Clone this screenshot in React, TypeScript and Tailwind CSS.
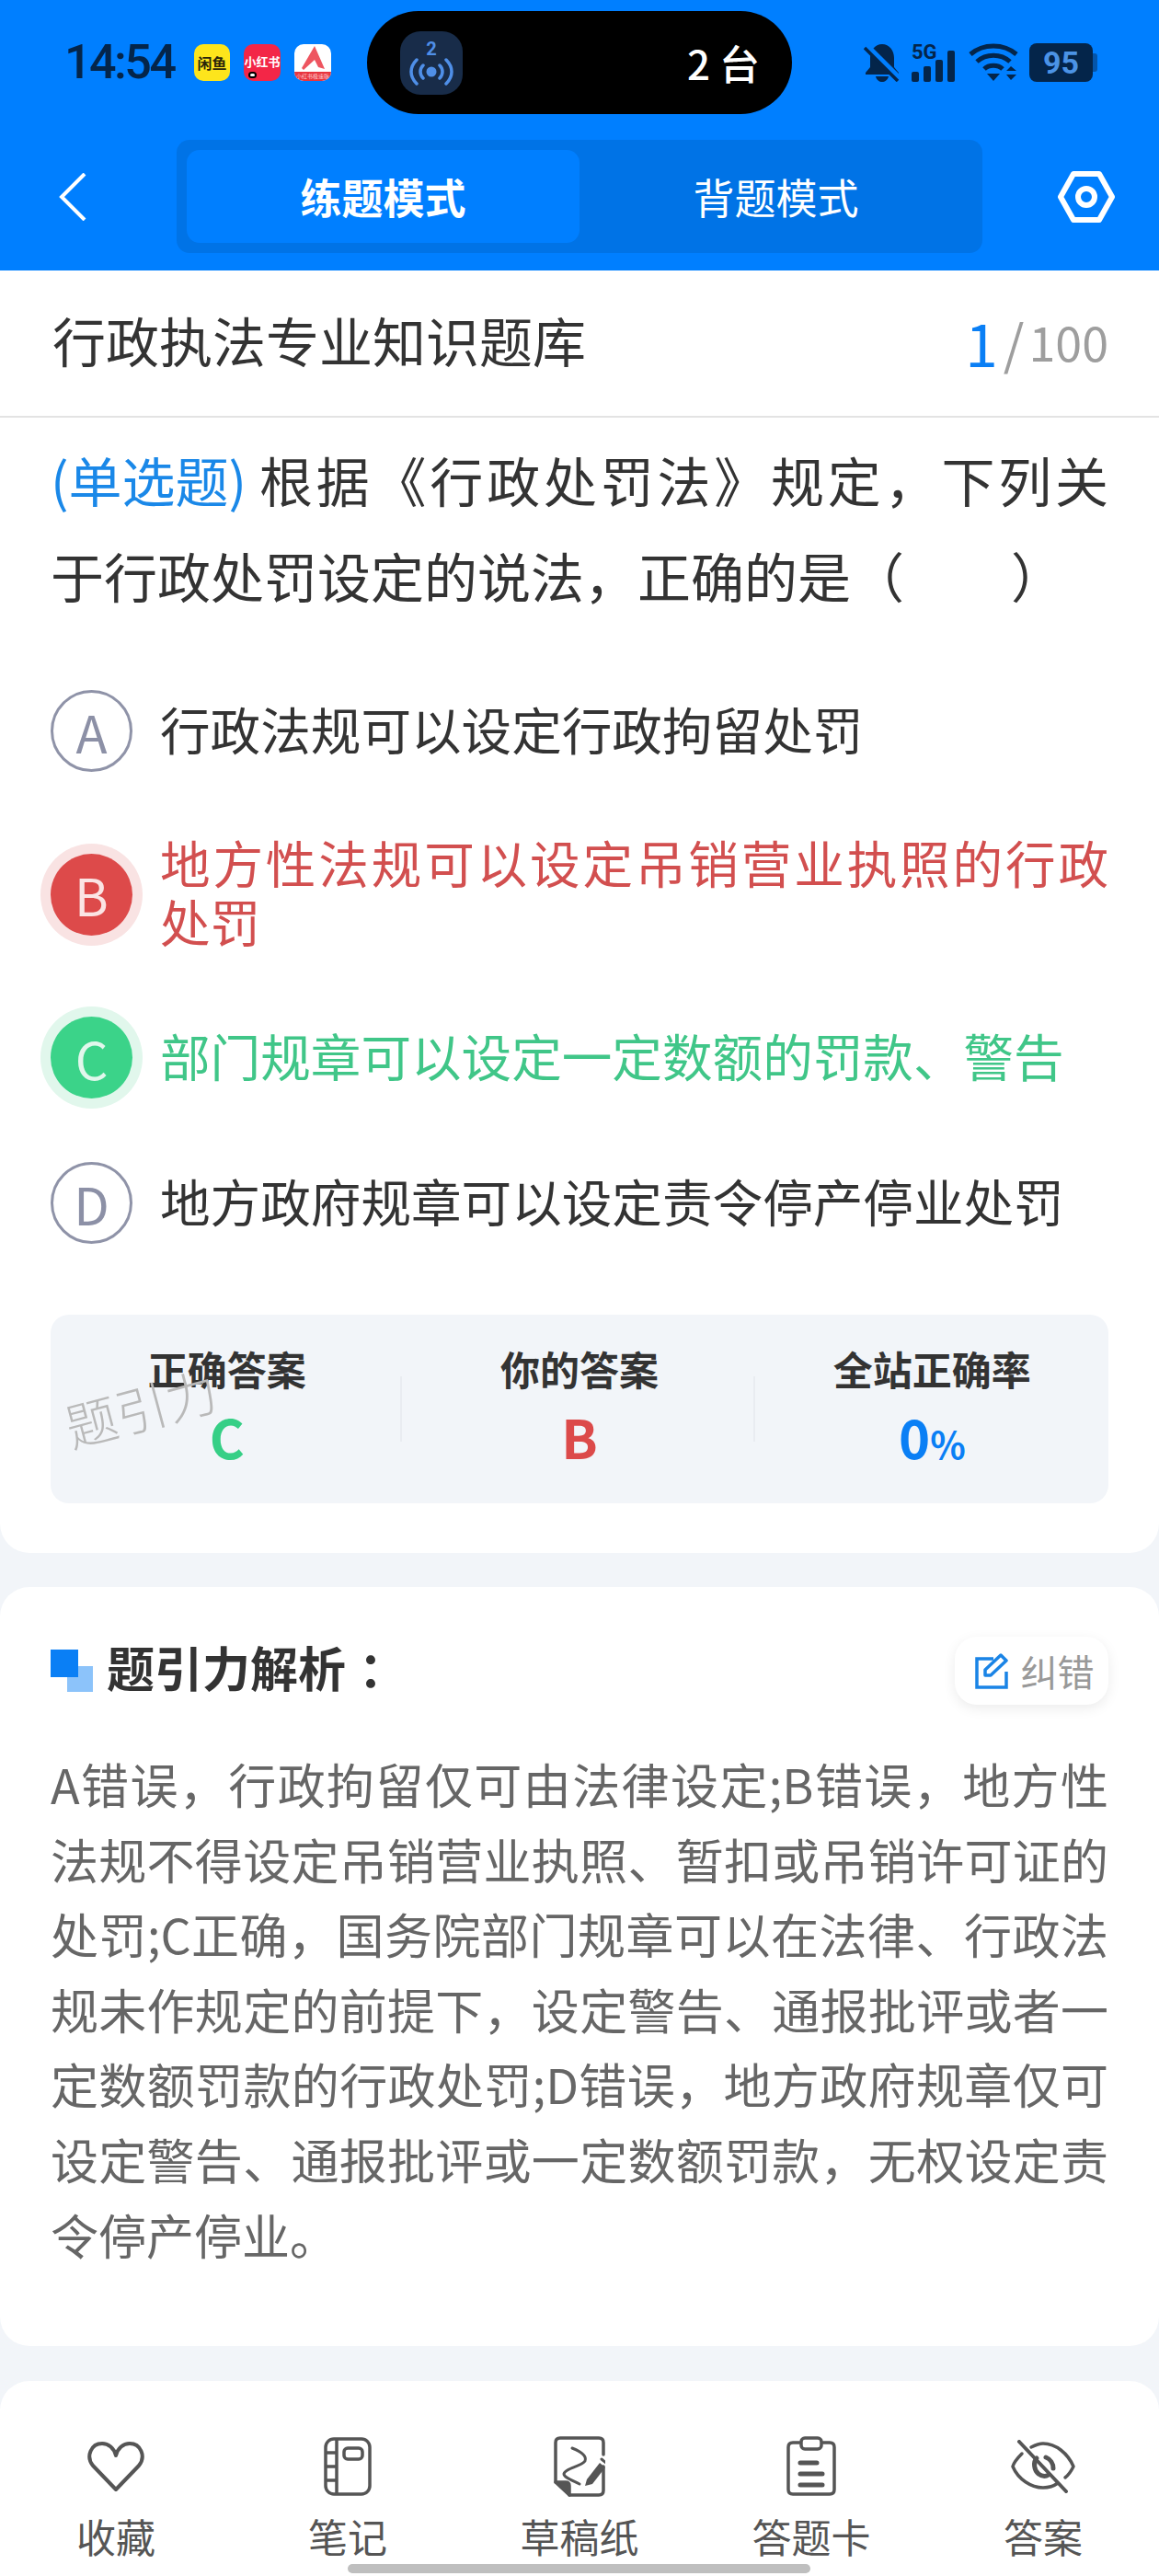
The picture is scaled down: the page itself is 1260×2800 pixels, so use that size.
const STATUS_DARK = "#04254a";

const TOOLBAR = [
  { label: "收藏", icon: <HeartIcon /> },
  { label: "笔记", icon: <NotebookIcon /> },
  { label: "草稿纸", icon: <DraftIcon /> },
  { label: "答题卡", icon: <ClipboardIcon /> },
  { label: "答案", icon: <EyeOffIcon /> },
];

const STATS = [
  { label: "正确答案", value: "C", cls: "text-[#36cf86]" },
  { label: "你的答案", value: "B", cls: "text-[#dc4a4a]" },
  { label: "全站正确率", value: "0", cls: "text-[#0a7ff5]", suffix: "%" },
];

function HeartIcon() {
  return (
    <svg width="64" height="56" viewBox="0 0 64 56" fill="none" stroke="#555" strokeWidth="4" strokeLinejoin="round">
      <path d="M32 53 L7 27 C-1 17 5 3 17 3 C24 3 30 8 32 16 C34 8 40 3 47 3 C59 3 65 17 57 27 Z" />
    </svg>
  );
}

function NotebookIcon() {
  return (
    <svg width="52" height="64" viewBox="0 0 52 64" fill="none" stroke="#555" strokeWidth="3.5" strokeLinejoin="round">
      <rect x="2" y="2" width="48" height="60" rx="9" />
      <path d="M14 2 V62 M2 17 H14 M2 32 H14 M2 47 H14" />
      <rect x="22" y="12" width="20" height="12" rx="4" />
    </svg>
  );
}

function DraftIcon() {
  return (
    <svg width="56" height="66" viewBox="0 0 56 66" fill="none" stroke="#555" strokeWidth="3.5" strokeLinejoin="round" strokeLinecap="round">
      <path d="M2 50 V7 Q2 2 7 2 H49 Q54 2 54 7 V20 M54 33 V59 Q54 64 49 64 H17" />
      <path d="M2 50 L17 64 V54 Q17 50 13 50 Z" fill="#555" />
      <path d="M20 13 C30 17 36 22 34 27 C30 33 12 35 11 41 C11 45 20 48 28 52" strokeWidth="3" />
      <path d="M36 47 L50 29 L56 34 L42 52 L34 54 Z" fill="#555" stroke="none" />
      <path d="M52 25 L58 30" stroke="#555" strokeWidth="3" />
    </svg>
  );
}

function ClipboardIcon() {
  return (
    <svg width="56" height="66" viewBox="0 0 56 66" fill="none" stroke="#555" strokeWidth="3.5" strokeLinecap="round" strokeLinejoin="round">
      <path d="M15 7 H8 Q3 7 3 12 V58 Q3 63 8 63 H48 Q53 63 53 58 V12 Q53 7 48 7 H41" />
      <rect x="17" y="2" width="22" height="12" rx="4" />
      <path d="M16 29 H34 M16 41 H40 M16 53 H40" strokeWidth="5" />
    </svg>
  );
}

function EyeOffIcon() {
  return (
    <svg width="70" height="58" viewBox="0 0 70 58" fill="none" stroke="#555" strokeWidth="3.5" strokeLinecap="round" strokeLinejoin="round">
      <path d="M12 15 C6 21 3 25 2 29 C8 43 22 52 35 52 C41 52 47 50 51 47 M22 8 C26 6 31 4 35 4 C49 4 62 15 68 29 C66 33 63 38 59 41" />
      <path d="M28 20 C24 24 25 33 30 37 C34 40 38 40 41 38 M38 19 C43 21 46 26 46 31" strokeWidth="5" />
      <path d="M9 2 L60 56" strokeWidth="4" />
    </svg>
  );
}

function BellOffIcon() {
  return (
    <svg width="40" height="42" viewBox="0 0 40 42">
      <path d="M20 1 C12 1 7 8 7 16 V26 L2 32 V34 H38 V32 L33 26 V16 C33 8 28 1 20 1 Z M13 36 C14 40 17 42 20 42 C23 42 26 40 27 36 Z" fill={STATUS_DARK} />
      <path d="M2 2 L38 38" stroke="#007fff" strokeWidth="7" />
      <path d="M1 5 L37 41" stroke={STATUS_DARK} strokeWidth="3.5" />
    </svg>
  );
}

function WifiIcon() {
  return (
    <svg width="54" height="42" viewBox="0 0 54 42" fill="none" stroke={STATUS_DARK} strokeWidth="5">
      <path d="M2 12 C16 0 38 0 52 12" />
      <path d="M9 20 C19 11 35 11 45 20" />
      <path d="M17 28 C22 23 32 23 37 28" />
      <path d="M20 33 H34 L27 41 Z" fill={STATUS_DARK} stroke="none" />
      <path d="M41 30 L46 25 L52 30 Z M41 34 H52 L46 40 Z" fill={STATUS_DARK} stroke="none" />
    </svg>
  );
}

function SignalIcon() {
  return (
    <div className="relative h-[42px] w-[50px]">
      <span className="absolute left-0 top-[-3px] text-[22px] leading-[26px] font-bold text-[#04254a] [font-family:'Roboto',sans-serif]">5G</span>
      <div className="absolute bottom-0 left-0 flex items-end gap-[5px]">
        <span className="h-[11px] w-[8px] rounded-[2px] bg-[#04254a]" />
        <span className="h-[17px] w-[8px] rounded-[2px] bg-[#04254a]" />
        <span className="h-[24px] w-[8px] rounded-[2px] bg-[#04254a]" />
        <span className="h-[34px] w-[8px] rounded-[2px] bg-[#04254a]" />
      </div>
    </div>
  );
}

function BroadcastTile() {
  return (
    <div className="flex h-[69px] w-[68px] flex-col items-center justify-center rounded-[22px] bg-[#182c49]">
      <span className="text-[20px] leading-[20px] font-bold text-[#4f8fe8] [font-family:'Roboto',sans-serif]">2</span>
      <svg width="50" height="30" viewBox="0 0 50 30" fill="none" stroke="#4f8fe8" strokeWidth="3.5" strokeLinecap="round">
        <path d="M9 2 C1 10 1 20 9 28 M41 2 C49 10 49 20 41 28 M16 8 C12 12 12 18 16 22 M34 8 C38 12 38 18 34 22" />
        <circle cx="25" cy="15" r="5.5" fill="#4f8fe8" stroke="none" />
      </svg>
    </div>
  );
}

function AppIcons() {
  return (
    <div className="ml-[22px] flex gap-[15px]">
      <div className="flex h-[40px] w-[39px] items-center justify-center rounded-[10px] bg-[#fde51c] text-[16px] leading-none font-bold whitespace-nowrap text-[#29240a]">闲鱼</div>
      <div className="relative flex h-[40px] w-[40px] items-center justify-center rounded-[10px] bg-[#f32647] pb-[4px] text-[13px] leading-none font-bold whitespace-nowrap text-white">
        小红书
        <span className="absolute bottom-[3px] left-[5px] h-[7px] w-[9px] rounded-full border-[2px] border-black bg-white" />
      </div>
      <div className="relative h-[40px] w-[40px] overflow-hidden rounded-[10px] bg-white">
        <svg width="40" height="32" viewBox="0 0 40 32" className="absolute left-0 top-0">
          <path d="M22 2 L33 27 L26 25 L22 17 L10 28 L8 26 Z" fill="#ee5560" />
        </svg>
        <div className="absolute bottom-0 left-0 flex h-[10px] w-full items-center justify-center bg-[#e8353f] text-[6px] leading-none whitespace-nowrap text-[#ffd0d0]">小红书极速版</div>
      </div>
    </div>
  );
}

function StatusBar() {
  return (
    <div className="flex h-[124px] items-start pl-[70px] pt-[12px]">
      <div className="mt-[36px] flex h-[40px] items-center">
        <span className="w-[119px] text-[52px] leading-[40px] font-medium tracking-[-2.5px] text-[#04254a] [font-family:'Roboto',sans-serif]">14:54</span>
        <AppIcons />
      </div>
      <div className="ml-[39px] flex h-[112px] w-[462px] items-center justify-between rounded-full bg-black pl-[36px] pr-[35px]">
        <BroadcastTile />
        <span className="text-[44px] leading-none font-medium text-white">2 台</span>
      </div>
      <div className="ml-[78px] mt-[35px] flex items-center gap-[12px]">
        <BellOffIcon />
        <SignalIcon />
        <WifiIcon />
        <div className="flex items-center">
          <div className="flex h-[42px] w-[69px] items-center justify-center rounded-[8px] bg-[#04254a] text-[34px] leading-none font-bold text-[#4b93e6] [font-family:'Roboto',sans-serif]">95</div>
          <span className="h-[20px] w-[5px] rounded-r-[3px] bg-[#0455aa]" />
        </div>
      </div>
    </div>
  );
}

function NavBar() {
  return (
    <div className="mt-[28px] flex h-[123px] items-center pl-[64px]">
      <svg width="30" height="52" viewBox="0 0 30 52" fill="none" stroke="white" strokeWidth="4">
        <path d="M28 1 L3 26 L28 51" />
      </svg>
      <div className="ml-[98px] flex h-[123px] w-[876px] rounded-[14px] bg-[#0073e6] p-[11px] text-[45px] text-white">
        <div className="flex w-[427px] items-center justify-center rounded-[14px] bg-[#007fff] font-bold">练题模式</div>
        <div className="flex flex-1 items-center justify-center">背题模式</div>
      </div>
      <svg className="ml-[82px]" width="62" height="56" viewBox="0 0 62 56" fill="none" stroke="white" strokeWidth="6" strokeLinejoin="round">
        <path d="M17 3 H45 L59 28 L45 53 H17 L3 28 Z" />
        <circle cx="31" cy="28" r="9" />
      </svg>
    </div>
  );
}

function Option({ letter, text, state }: { letter: string; text: string; state?: "wrong" | "right" }) {
  const badge =
    state === "wrong"
      ? "bg-[#dd4a4a] text-[#fbe4e4] shadow-[0_0_0_11px_#f9e3e3]"
      : state === "right"
        ? "bg-[#3bd389] text-[#e1f7ec] shadow-[0_0_0_11px_#e1f7ec]"
        : "border-[3px] border-[#8f93a8] text-[#8c90a6]";
  const color = state === "wrong" ? "text-[#d24f4f]" : state === "right" ? "text-[#40c688]" : "text-[#333]";
  return (
    <div className="flex items-center">
      <div className={`flex h-[89px] w-[89px] shrink-0 items-center justify-center rounded-full text-[56px] leading-none ${badge}`}>
        {letter}
      </div>
      <p className={`-mt-[3px] mb-[3px] ml-[30px] flex-1 text-justify text-[54.6px] leading-[64px] ${color}`}>{text}</p>
    </div>
  );
}

function QuestionCard() {
  return (
    <section className="rounded-b-[32px] bg-white">
      <div className="flex h-[160px] items-center justify-between border-b-2 border-[#e3e3e3] pl-[57px] pr-[55px]">
        <h1 className="-mt-[4px] mb-[4px] text-[58px] text-[#333]">行政执法专业知识题库</h1>
        <div className="-mt-[2px] mb-[2px] flex items-center text-[#9e9e9e]">
          <span className="text-[64px] leading-[70px] text-[#0a7ff5]">1</span>
          <span className="ml-[6px] mr-[5px] text-[58px] leading-[70px]">/</span>
          <span className="text-[52px] leading-[70px]">100</span>
        </div>
      </div>
      <div className="px-[55px] pb-[54px] pt-[15px]">
        <p className="text-justify text-[58px] leading-[104px] text-[#333]">
          <span className="mr-[10px] inline-block text-[#1a88e8]">(单选题)</span>
          根据《行政处罚法》规定，下列关于行政处罚设定的说法，正确的是（　　）
        </p>
        <div className="mt-[73px] flex flex-col gap-[69px]">
          <Option letter="A" text="行政法规可以设定行政拘留处罚" />
          <Option letter="B" text="地方性法规可以设定吊销营业执照的行政处罚" state="wrong" />
          <Option letter="C" text="部门规章可以设定一定数额的罚款、警告" state="right" />
          <Option letter="D" text="地方政府规章可以设定责令停产停业处罚" />
        </div>
        <div className="relative mt-[77px] grid h-[205px] grid-cols-3 rounded-[20px] bg-[#f2f5f9] pt-[31px]">
          {STATS.map((stat, i) => (
            <div key={stat.label} className="relative flex flex-col items-center">
              <span className="text-[43px] leading-[54px] font-bold text-[#333]">{stat.label}</span>
              <span className={`mt-[11px] text-[58px] leading-[72px] font-bold ${stat.cls}`}>
                {stat.value}
                {stat.suffix && <span className="text-[40px]">{stat.suffix}</span>}
              </span>
              {i > 0 && <span className="absolute left-[-3px] top-[36px] h-[71px] w-[2px] bg-[#e9ecf1]" />}
            </div>
          ))}
          <span className="absolute left-[14px] top-[72px] -rotate-[15deg] text-[56px] leading-none font-light text-[#b9b9b9]">
            题引力
          </span>
        </div>
      </div>
    </section>
  );
}

function AnalysisCard() {
  return (
    <section className="mt-[37px] rounded-[32px] bg-white px-[55px] pb-[81px] pt-[54px]">
      <div className="flex h-[74px] items-center justify-between">
        <div className="flex items-center">
          <div className="relative h-[46px] w-[46px]">
            <span className="absolute bottom-0 right-0 h-[28px] w-[28px] bg-[#8cc3fa]" />
            <span className="absolute left-0 top-0 h-[30px] w-[30px] bg-[#0a7ff5]" />
          </div>
          <h2 className="-mt-[4px] mb-[4px] ml-[15px] text-[52px] font-bold text-[#333]">
            题引力解析<span className="ml-[14px]">：</span>
          </h2>
        </div>
        <button className="flex h-[74px] w-[167px] items-center justify-center gap-[14px] rounded-[24px] bg-white pl-[6px] text-[40px] text-[#999] shadow-[0_4px_14px_rgba(0,0,0,0.08)]">
          <svg width="36" height="40" viewBox="0 0 36 40" fill="none" stroke="#1a84e6" strokeWidth="3.5">
            <path d="M20 7 H2 V38 H34 V21" />
            <path d="M11 25 L11 19 L28 3 L34 9 L17 25 Z" strokeLinejoin="round" />
          </svg>
          <span className="whitespace-nowrap">纠错</span>
        </button>
      </div>
      <p className="mt-[45px] text-justify text-[52px] leading-[81.6px] text-[#666]">
        A错误，行政拘留仅可由法律设定;B错误，地方性法规不得设定吊销营业执照、暂扣或吊销许可证的处罚;C正确，国务院部门规章可以在法律、行政法规未作规定的前提下，设定警告、通报批评或者一定数额罚款的行政处罚;D错误，地方政府规章仅可设定警告、通报批评或一定数额罚款，无权设定责令停产停业。
      </p>
    </section>
  );
}

export default function App() {
  return (
    <div className="relative flex h-[2800px] w-[1260px] flex-col overflow-hidden bg-[#f2f5f9] [font-family:'Noto_Sans_CJK_SC','Noto_Sans',sans-serif] [text-spacing-trim:space-all]">
      <header className="h-[294px] bg-[#007fff]">
        <StatusBar />
        <NavBar />
      </header>
      <QuestionCard />
      <AnalysisCard />
      <nav className="mt-auto grid h-[212px] grid-cols-5 rounded-t-[32px] bg-white">
        {TOOLBAR.map((item) => (
          <div key={item.label} className="flex flex-col items-center">
            <div className="mt-[60px] flex h-[66px] items-center">{item.icon}</div>
            <span className="mt-[17px] text-[43px] leading-[50px] text-[#555]">{item.label}</span>
          </div>
        ))}
      </nav>
      <div className="absolute bottom-[3px] left-[378px] h-[10px] w-[503px] rounded-full bg-[#bfbfbf]" />
    </div>
  );
}
